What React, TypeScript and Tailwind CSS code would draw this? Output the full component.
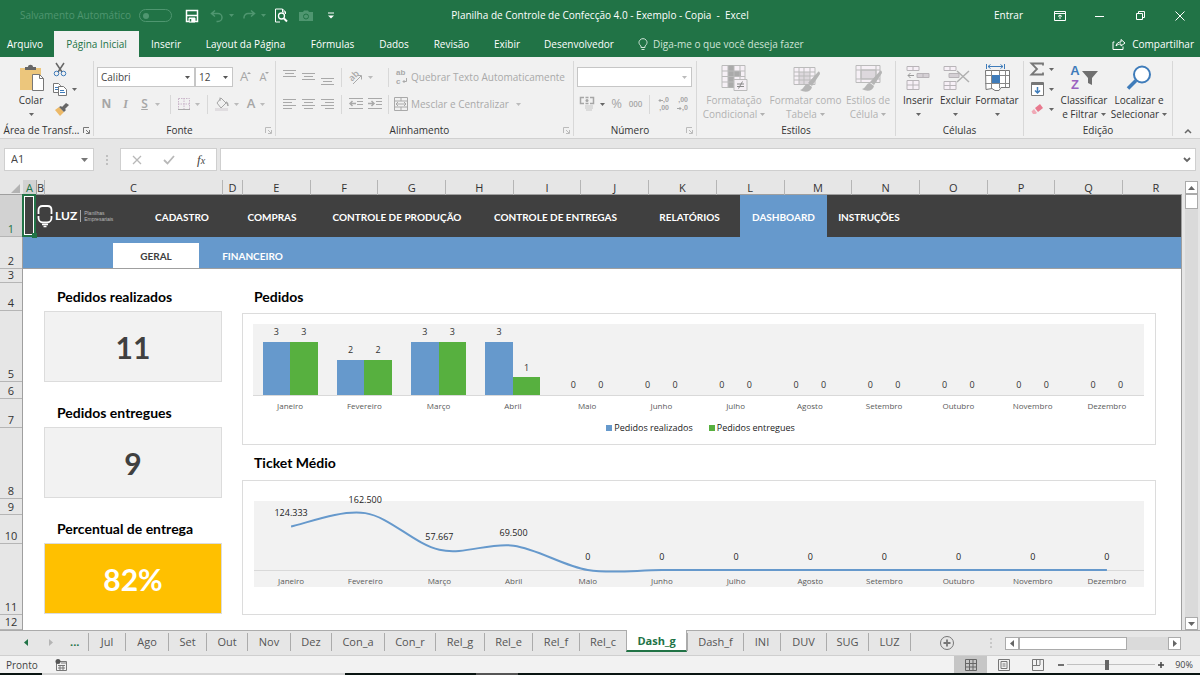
import { useState } from 'react';
import type { ReactNode } from 'react';

const months = ['Janeiro', 'Fevereiro', 'Março', 'Abril', 'Maio', 'Junho', 'Julho', 'Agosto', 'Setembro', 'Outubro', 'Novembro', 'Dezembro'];
const placed = [3, 2, 3, 3, 0, 0, 0, 0, 0, 0, 0, 0];
const delivered = [3, 2, 3, 1, 0, 0, 0, 0, 0, 0, 0, 0];
const ticket = [124333, 162500, 57667, 69500, 0, 0, 0, 0, 0, 0, 0, 0];

const ribbonTabs = [
  { label: 'Arquivo', width: 'w-[54px] pr-1' },
  { label: 'Página Inicial', width: 'w-[85px]', active: true },
  { label: 'Inserir', width: 'w-[54px]' },
  { label: 'Layout da Página', width: 'w-[105px]' },
  { label: 'Fórmulas', width: 'w-[69px]' },
  { label: 'Dados', width: 'w-[54px]' },
  { label: 'Revisão', width: 'w-[61px]' },
  { label: 'Exibir', width: 'w-[50px]' },
  { label: 'Desenvolvedor', width: 'w-[94px]' },
];

const columns = ['A', 'B', 'C', 'D', 'E', 'F', 'G', 'H', 'I', 'J', 'K', 'L', 'M', 'N', 'O', 'P', 'Q', 'R'];

const rows = ['h-[42px]', 'h-[32px]', 'h-[14px]', 'h-[28px]', 'h-[71px]', 'h-[17px]', 'h-[29px]', 'h-[71px]', 'h-[16px]', 'h-[29px]', 'h-[71px]', 'h-[15px]'];

const navItems = [
  { label: 'CADASTRO', width: 'w-[80px]' },
  { label: 'COMPRAS', width: 'w-[100px]' },
  { label: 'CONTROLE DE PRODUÇÃO', width: 'w-[150px]' },
  { label: 'CONTROLE DE ENTREGAS', width: 'w-[167px]' },
  { label: 'RELATÓRIOS', width: 'w-[101px]' },
  { label: 'DASHBOARD', width: 'w-[87px]', active: true },
  { label: 'INSTRUÇÕES', width: 'w-[84px]' },
];

const sheets = [
  { label: 'Jul', width: 'w-[37px]' },
  { label: 'Ago', width: 'w-[43px]' },
  { label: 'Set', width: 'w-[38px]' },
  { label: 'Out', width: 'w-[41px]' },
  { label: 'Nov', width: 'w-[43px]' },
  { label: 'Dez', width: 'w-[41px]' },
  { label: 'Con_a', width: 'w-[53px]' },
  { label: 'Con_r', width: 'w-[51px]' },
  { label: 'Rel_g', width: 'w-[49px]' },
  { label: 'Rel_e', width: 'w-[48px]' },
  { label: 'Rel_f', width: 'w-[47px]' },
  { label: 'Rel_c', width: 'w-[47px]' },
  { label: 'Dash_g', width: 'w-[61px]' },
  { label: 'Dash_f', width: 'w-[56px]' },
  { label: 'INI', width: 'w-[37px]' },
  { label: 'DUV', width: 'w-[46px]' },
  { label: 'SUG', width: 'w-[42px]' },
  { label: 'LUZ', width: 'w-[42px]' },
];

interface IconProps {
  w?: number;
  h?: number;
  children: ReactNode;
  className?: string;
}

const Icon = ({ w = 16, h = 16, children, className = '' }: IconProps) => (
  <svg width={w} height={h} viewBox={`0 0 ${w} ${h}`} fill="none" stroke="currentColor" className={`shrink-0 overflow-visible ${className}`} aria-hidden="true">
    {children}
  </svg>
);

const Caret = ({ className = 'text-[#666]' }: { className?: string }) => (
  <Icon w={5} h={3} className={className}><path d="M0 0h5L2.5 3z" fill="currentColor" stroke="none" /></Icon>
);

const Separator = () => <span className="mx-1 h-[19px] w-px bg-[#d8d8d8]" />;

/* ---------- title bar ---------- */

const TitleBar = () => (
  <header className="grid h-[31px] grid-cols-[1fr_auto_1fr] items-center text-[10px] text-white">
    <div className="flex items-center pl-5 text-[#4f9670]">
      <label className="flex items-center gap-1.5">
        <span className="w-[113px] whitespace-nowrap">Salvamento Automático</span>
        <input type="checkbox" className="peer sr-only" />
        <span className="flex h-[13px] w-[33px] items-center rounded-full border border-[#4f9670] px-[3px]"><span className="size-1.5 rounded-full bg-[#4f9670]" /></span>
      </label>
      <button aria-label="Salvar" className="ml-3 flex w-[16px] justify-center text-white">
        <Icon w={14} h={14}><path d="M1.5 1.5h11v11h-11z" strokeWidth="1.5" /><path d="M2 6.500h10" strokeWidth="1.500" /><path d="M4 9h6v4H4z" fill="currentColor" /><path d="M5.500 10v2.500" stroke="#217346" strokeWidth="1.500" /></Icon>
      </button>
      <button aria-label="Desfazer" className="ml-2.5 flex items-center gap-[5px]">
        <Icon w={14} h={14}><path d="M5 1.5 1.5 4.500 5 7.500M1.500 4.500H8a4 4 0 0 1 0 8H6.500" strokeWidth="1.500" /></Icon><Caret className="text-[#4f9670]" />
      </button>
      <button aria-label="Refazer" className="ml-2 flex items-center gap-[5px]">
        <Icon w={14} h={14}><path d="M9 1.500 12.500 4.500 9 7.500M12.500 4.500H6a4 4 0 0 0-4 4v1" strokeWidth="1.500" /></Icon><Caret className="text-[#4f9670]" />
      </button>
      <button aria-label="Visualizar impressão" className="ml-2 text-white">
        <Icon w={14} h={15}><path d="M11.500 6V4L8.500 1h-7v13H6" /><circle cx="7.500" cy="8" r="3" strokeWidth="1.300" /><path d="m10 10.500 3 3" strokeWidth="2" /><path d="M8.500 1v3h3" /></Icon>
      </button>
      <button aria-label="Câmera" className="ml-2.5">
        <Icon w={16} h={12}><path d="M1 2h4l1-1.500h4L11 2h4v9H1z" fill="currentColor" stroke="none" /><circle cx="8" cy="6.500" r="2.500" stroke="#217346" /></Icon>
      </button>
      <button aria-label="Personalizar" className="ml-3.5 text-white">
        <Icon w={6} h={7}><path d="M0 1h6" /><path d="M0 3.500h6L3 6.500z" fill="currentColor" stroke="none" /></Icon>
      </button>
    </div>
    <h1 className="whitespace-pre text-[10px]">Planilha de Controle de Confecção 4.0 - Exemplo - Copia  -  Excel</h1>
    <div className="flex items-center justify-end">
      <button className="mr-[17px]">Entrar</button>
      <button aria-label="Opções da faixa" className="flex w-10 justify-center">
        <Icon w={12} h={10}><path d="M.5.5h11v9H.5zM1 2.500h10M6 8V4M4 5.500 6 4l2 1.500" /></Icon>
      </button>
      <button aria-label="Minimizar" className="flex w-10 justify-center"><Icon w={10} h={10}><path d="M0 5.500h9" /></Icon></button>
      <button aria-label="Restaurar" className="flex w-10 justify-center"><Icon w={9} h={9}><path d="M.5 2.500h6v6h-6zM2.500 2V.500h6v6H7" /></Icon></button>
      <button aria-label="Fechar" className="flex w-10 justify-center"><Icon w={10} h={10}><path d="m.5.5 9 9M9.500.5l-9 9" /></Icon></button>
    </div>
  </header>
);

const RibbonTabs = () => (
  <nav className="flex h-[26px] items-stretch text-[10px] text-white">
    {ribbonTabs.map(({ label, width, active }) => (
      <button key={label} className={`${width} shrink-0 whitespace-nowrap ${active ? 'bg-[#f1f1f1] text-[#217346]' : ''}`}>{label}</button>
    ))}
    <button className="ml-3 flex items-center gap-[5px] whitespace-nowrap text-[#cfe3d7]">
      <Icon w={10} h={13}><path d="M3 9.500V8C.5 6 .5 3.500 2 2a4 4 0 0 1 6 0c1.500 1.500 1.500 4-1 6v1.500zM3.500 11.500h3" /></Icon>
      Diga-me o que você deseja fazer
    </button>
    <button className="ml-auto mr-1.5 flex items-center gap-1.5">
      <Icon w={14} h={12}><path d="M2.500 4H1v7.500h10V8.500M4 8c.5-3 2.500-4 5-4V1.500L13 5 9 8V6C7 6 5.500 6.500 4 8z" /></Icon>
      Compartilhar
    </button>
  </nav>
);

/* ---------- ribbon ---------- */

interface GroupProps {
  title: string;
  width: string;
  children: ReactNode;
  launcher?: string;
}

const Group = ({ title, width, children, launcher }: GroupProps) => (
  <section className={`${width} flex shrink-0 flex-col pb-0.5 pt-1`}>
    <div className="flex flex-1 border-r border-[#d8d8d8]">{children}</div>
    <div className="flex h-[12px] items-center border-r border-[#d8d8d8] text-[10px] leading-[12px] text-[#333]">
      <h2 className="flex-1 whitespace-nowrap text-center">{title}</h2>
      {launcher && (
        <button aria-label={`Mais opções de ${title}`} className={`mr-[3px] ${launcher}`}>
          <Icon w={7} h={7}><path d="M.5 6V.5H6M3 3l3 3M6.500 3v3.500H3" /></Icon>
        </button>
      )}
    </div>
  </section>
);

interface BigButtonProps {
  icon: ReactNode;
  lines: string[];
  width: string;
  disabled?: boolean;
}

const BigButton = ({ icon, lines, width, disabled }: BigButtonProps) => (
  <button className={`${width} flex h-[60px] shrink-0 flex-col items-center text-[10px] leading-[14px] whitespace-nowrap ${disabled ? 'text-[#b1b1b1]' : 'text-[#333]'}`}>
    <span className="flex h-[31px] items-center">{icon}</span>
    <span>{lines[0]}</span>
    <span className="flex h-[14px] items-center gap-[3px]">{lines[1]}<Caret className={disabled ? 'text-[#b1b1b1]' : 'text-[#666]'} /></span>
  </button>
);

const SmallButton = ({ label, children, className = 'w-[19px]' }: { label: string; children: ReactNode; className?: string }) => (
  <button aria-label={label} className={`${className} flex h-5 shrink-0 items-center justify-center gap-[5px]`}>{children}</button>
);

const ComboBox = ({ label, options, width, tone }: { label: string; options: string[]; width: string; tone: string }) => (
  <span className={`${width} relative flex h-5 items-center border border-[#c6c6c6] bg-white`}>
    <select aria-label={label} className="h-full w-full appearance-none pl-[3px] text-[10px] text-[#444] outline-none">
      {options.map((option) => <option key={option}>{option}</option>)}
    </select>
    <span className={`pointer-events-none absolute right-1 ${tone}`}><Caret className="" /></span>
  </span>
);

const lineSets = {
  top: 'M0 1.500h13M2 4.500h9M0 7.500h13',
  left: 'M0 1.500h13M0 4.500h9M0 7.500h13M0 10.500h9',
  center: 'M0 1.500h13M2 4.500h9M0 7.500h13M2 10.500h9',
  right: 'M0 1.500h13M4 4.500h9M0 7.500h13M4 10.500h9',
};

const Brush = () => (
  <><path d="M23 5 13 16l4 3 8-12c0-2-1-3-2-2z" fill="#b5b5b5" stroke="none" /><path d="M13 17c-4 0-4 5-8 6 5 3 11 2 12-3z" fill="#b5b5b5" stroke="none" /></>
);

const ClipboardGroup = () => (
  <Group title="Área de Transf..." width="w-[94px]" launcher="text-[#777]">
    <div className="pl-[9px] pt-px">
      <BigButton width="w-[44px]" lines={['Colar', '']} icon={
        <Icon w={26} h={28}>
          <path d="M2 4h21v22H2z" fill="#ecc67c" stroke="none" />
          <path d="M7 6V3h3c0-3 5-3 5 0h3v3z" fill="#666" stroke="none" />
          <path d="M14.500 10.500h7l4 4v12h-11z" fill="#fff" stroke="#777" /><path d="M21.500 10.500v4h4" stroke="#777" />
        </Icon>} />
    </div>
    <div className="-mt-0.5 flex flex-col">
      <SmallButton label="Recortar" className="w-[14px]">
        <Icon w={14} h={15}><path d="m3 1 6 9M11 1 5 10" stroke="#666" strokeWidth="1.500" /><circle cx="3.500" cy="11.500" r="2.300" stroke="#3f7cba" /><circle cx="10.500" cy="11.500" r="2.300" stroke="#3f7cba" /></Icon>
      </SmallButton>
      <SmallButton label="Copiar" className="w-[24px]">
        <Icon w={14} h={14}><path d="M.5 1.500h5l2 2v7h-7z" fill="#fff" stroke="#777" /><path d="M2 5.500h3M2 7.500h3" stroke="#3f7cba" /><path d="M5.500 4.500h5l3 3v6h-8z" fill="#fff" stroke="#777" /><path d="M7 8.500h4M7 10.500h5" stroke="#3f7cba" /></Icon>
        <Caret />
      </SmallButton>
      <SmallButton label="Pincel de formatação" className="w-[16px]">
        <Icon w={15} h={14}><path d="m1 8 4-3 5 5-4 4z" fill="#ecb968" stroke="none" /><path d="m5 5 2-1 1 1 4-4 3 2-4 4 1 1-2 2z" fill="#666" stroke="none" /></Icon>
      </SmallButton>
    </div>
  </Group>
);

const FontGroup = () => (
  <Group title="Fonte" width="w-[182px]" launcher="text-[#bbb]">
    <div className="flex flex-col gap-[7px] pl-[3px] pt-1.5 text-[#a6a6a6]">
      <div className="flex items-center">
        <ComboBox label="Fonte" options={['Calibri', 'Arial']} width="w-[98px]" tone="text-[#555]" />
        <ComboBox label="Tamanho" options={['12', '14']} width="w-[38px]" tone="text-[#555]" />
        <SmallButton label="Aumentar fonte" className="ml-[3px] w-[19px]"><span className="text-[13px]">A</span><Icon w={4} h={12} className="-ml-1.5"><path d="M0 3h4L2 1z" fill="currentColor" stroke="none" /></Icon></SmallButton>
        <SmallButton label="Diminuir fonte"><span className="text-[11px]">A</span><Icon w={4} h={12} className="-ml-1.5"><path d="M0 1h4L2 3z" fill="currentColor" stroke="none" /></Icon></SmallButton>
      </div>
      <div className="flex items-center text-[12px]">
        <SmallButton label="Negrito"><b>N</b></SmallButton>
        <SmallButton label="Itálico"><i className="font-['Liberation_Serif',serif] font-bold">I</i></SmallButton>
        <SmallButton label="Sublinhado" className="w-[31px]"><u className="font-semibold">S</u><Caret className="ml-0.5 text-[#bbb]" /></SmallButton>
        <Separator />
        <SmallButton label="Bordas" className="w-[28px]"><Icon w={12} h={12}><path d="M.5.5h11v11H.5zM6 0v12M0 6h12" stroke="#c9b5c9" strokeDasharray="1.500 1" /><path d="M0 11.500h12" stroke="#aaa" /></Icon><Caret className="text-[#bbb]" /></SmallButton>
        <Separator />
        <SmallButton label="Cor de preenchimento" className="w-[29px]"><Icon w={14} h={14}><path d="m6 1 5 5-5 5-4-5zM5 4V.500" /><path d="M11 5c2 1 2 3 2 4" strokeWidth="1.500" /><path d="M0 12.500h13" stroke="#e0dde0" strokeWidth="3" /></Icon><Caret className="text-[#bbb]" /></SmallButton>
        <SmallButton label="Cor da fonte" className="w-[30px]"><span className="text-[13px] font-semibold">A</span><Caret className="text-[#bbb]" /></SmallButton>
      </div>
    </div>
  </Group>
);

const AlignGroup = () => (
  <Group title="Alinhamento" width="w-[298px]" launcher="text-[#bbb]">
    <div className="flex flex-col gap-[7px] pl-1 pt-1.5 text-[#a9a9a9]">
      <div className="flex h-5 items-center">
        <SmallButton label="Alinhar acima"><Icon w={13} h={16}><path d={lineSets.top} /></Icon></SmallButton>
        <SmallButton label="Alinhar no meio"><Icon w={13} h={10}><path d={lineSets.top} /></Icon></SmallButton>
        <SmallButton label="Alinhar abaixo"><Icon w={13} h={9} className="mt-2"><path d={lineSets.top} /></Icon></SmallButton>
        <Separator />
        <SmallButton label="Orientação" className="w-[28px]">
          <span className="relative flex size-[15px] items-center justify-center">
            <span className="-translate-x-0.5 -translate-y-0.5 -rotate-45 text-[9px] font-semibold leading-none">ab</span>
            <Icon w={15} h={15} className="absolute"><path d="m5 14 8-8M9.500 5.500h4v4" /></Icon>
          </span>
          <Caret className="text-[#bbb]" />
        </SmallButton>
        <span className="w-2.5" />
        <Separator />
        <button className="flex items-center gap-[3px] whitespace-nowrap pl-[3px] text-[10px]">
          <span className="relative flex w-3 flex-col text-left font-['Liberation_Sans',sans-serif] text-[8px] font-bold leading-[9px]">
            <span>ab</span><span>c</span>
            <Icon w={6} h={6} className="absolute bottom-0.5 right-0"><path d="M4.500 0v3.500H1M2.500 2 1 3.500 2.500 5" /></Icon>
          </span>
          Quebrar Texto Automaticamente
        </button>
      </div>
      <div className="flex items-center">
        <SmallButton label="Alinhar à esquerda"><Icon w={13} h={12}><path d={lineSets.left} /></Icon></SmallButton>
        <SmallButton label="Centralizar"><Icon w={13} h={12}><path d={lineSets.center} /></Icon></SmallButton>
        <SmallButton label="Alinhar à direita"><Icon w={13} h={12}><path d={lineSets.right} /></Icon></SmallButton>
        <Separator />
        <SmallButton label="Diminuir recuo"><Icon w={14} h={12}><path d="M0 .5h14M8 3.500h6M8 6.500h6M0 10.500h14" /><path d="M7 5.500H1M3.500 3 1 5.500 3.500 8" strokeWidth="1.500" /></Icon></SmallButton>
        <SmallButton label="Aumentar recuo"><Icon w={14} h={12}><path d="M0 .5h14M8 3.500h6M8 6.500h6M0 10.500h14" /><path d="M0 5.500h6M3.500 3 6 5.500 3.500 8" strokeWidth="1.500" /></Icon></SmallButton>
        <Separator />
        <button className="flex items-center gap-[3px] whitespace-nowrap pl-px text-[10px]">
          <Icon w={14} h={14}><path d="M.5.500h13v13H.500zM.500 4h13M.500 10h13M7 .500V4M7 10v3.500" /><path d="M2 7h10M4 5 2 7l2 2M10 5l2 2-2 2" /></Icon>
          Mesclar e Centralizar <Caret className="ml-1 text-[#bbb]" />
        </button>
      </div>
    </div>
  </Group>
);

const NumberGroup = () => (
  <Group title="Número" width="w-[123px]" launcher="text-[#bbb]">
    <div className="flex flex-col gap-[7px] pl-[3px] pt-1.5 text-[#a6a6a6]">
      <ComboBox label="Formato de número" options={['']} width="w-[115px]" tone="text-[#bbb]" />
      <div className="flex items-center">
        <SmallButton label="Moeda" className="w-[30px]">
          <Icon w={15} h={14}><path d="M4 .500H.500v6H4M10 .500h3.500v6H10M5.500.500h3M5.500 6.500h3" strokeWidth="1.500" /><circle cx="7" cy="3.500" r="1.500" fill="currentColor" stroke="none" /><path d="M5 9h8M5 11h8M6 13h6" stroke="#c5c5c5" /></Icon><Caret />
        </SmallButton>
        <SmallButton label="Porcentagem"><span className="text-[13px]">%</span></SmallButton>
        <SmallButton label="Milhares"><span className="text-[8px] font-semibold">000</span></SmallButton>
        <Separator />
        <SmallButton label="Aumentar casas decimais">
          <span className="flex flex-col items-end font-['Liberation_Sans',sans-serif] text-[7px] font-bold leading-[8px]"><span className="flex items-center"><Icon w={5} h={5}><path d="M5 2.500H1M2.500 1 1 2.500 2.500 4" /></Icon>,0</span><span>,00</span></span>
        </SmallButton>
        <SmallButton label="Diminuir casas decimais">
          <span className="flex flex-col items-end font-['Liberation_Sans',sans-serif] text-[7px] font-bold leading-[8px]"><span>,00</span><span className="flex items-center"><Icon w={5} h={5}><path d="M0 2.500h4M2.500 1 4 2.500 2.500 4" /></Icon>,0</span></span>
        </SmallButton>
      </div>
    </div>
  </Group>
);

const StylesGroup = () => (
  <Group title="Estilos" width="w-[199px]">
    <div className="flex pl-0.5 pt-px">
      <BigButton disabled width="w-[70px]" lines={['Formatação', 'Condicional']} icon={
        <Icon w={28} h={28} className="text-[#bbb]">
          <path d="M2 1.500h23v22H2z" fill="#f6f0f6" /><path d="M8 1.500h6v22H8zM14 7h7v5h-7z" fill="#aaa" stroke="none" /><path d="M8 1v23M14 1v23M20 1v23M2 7h23M2 12.500h23M2 18h23" />
          <path d="M14 15.500h13v11H14z" fill="#f4eff4" /><path d="M17 20h7M17 22.500h7M22.500 17.500l-4 7" stroke="#888" />
        </Icon>} />
      <BigButton disabled width="w-[73px]" lines={['Formatar como', 'Tabela']} icon={
        <Icon w={28} h={28} className="text-[#bbb]">
          <path d="M2 3.500h21v17H2z" fill="#f6f0f6" /><path d="M7 8h11v12H7z" fill="#ddd8dd" stroke="none" /><path d="M7 3v18M12 3v18M18 3v18M2 8h21M2 12h21M2 16h21" /><g transform="translate(3 3)"><Brush /></g>
        </Icon>} />
      <BigButton disabled width="w-[52px]" lines={['Estilos de', 'Célula']} icon={
        <Icon w={28} h={28} className="text-[#bbb]">
          <path d="M2 1.500h24v17H2z" fill="#f6f0f6" /><path d="M7 6h15v9H7z" fill="#ddd8dd" /><path d="M7 1v18M22 1v18M2 6h24M2 15h24" /><g transform="translate(3 2)"><Brush /></g>
        </Icon>} />
    </div>
  </Group>
);

const CellsGroup = () => (
  <Group title="Células" width="w-[128px]">
    <div className="flex pl-[3px] pt-px">
      <BigButton width="w-[38px]" lines={['Inserir', '']} icon={
        <Icon w={26} h={26} className="text-[#b8b4b8]">
          <path d="M2 1.500h12v4H2zM8 1.500v4M2 15.500h12v9H2zM8 15.500v9M2 20h12" fill="#f7f0f7" /><path d="M12 8.500h12v4H12zM18 8.500v4" fill="#d5d0d5" /><path d="M9 10.500H3M5.500 8 3 10.500 5.500 13" stroke="#999" />
        </Icon>} />
      <BigButton width="w-[37px]" lines={['Excluir', '']} icon={
        <Icon w={28} h={26} className="text-[#b8b4b8]">
          <path d="M2 1.500h12v4H2zM8 1.500v4M2 16.500h12v8H2zM8 16.500v8M2 20.500h12" fill="#f7f0f7" /><path d="M7 8.500h10v4H7z" fill="#d5d0d5" /><path d="m15 6 12 11M27 6 15 17" stroke="#b0b0b0" strokeWidth="1.500" />
        </Icon>} />
      <BigButton width="w-[46px]" lines={['Formatar', '']} icon={
        <Icon w={27} h={28}>
          <path d="M2.500 0v5M20.500 0v5M4 2.500h15M6.500.5 4 2.500l2.500 2M16.500.5l2.500 2-2.500 2" stroke="#3f7cba" />
          <path d="M1.500 6.500h24v17H17l-2 3h-4l-3-2-6 1z" fill="#fff" stroke="#777" /><path d="M7.500 6v18M15.500 6v18M21.500 6v17M1 11.500h24M1 19.500h24" stroke="#888" /><path d="M8 11h8v8H8z" fill="#3f7cba" stroke="none" />
        </Icon>} />
    </div>
  </Group>
);

const EditGroup = () => (
  <Group title="Edição" width="w-[149px]">
    <div className="-mt-0.5 flex w-[28px] flex-col pl-[6px]">
      <SmallButton label="Soma" className="w-[24px]"><Icon w={14} h={14} className="text-[#777]"><path d="M13 3.500V1.500H1.500L7 7l-5.500 5.500H13V10.500" strokeWidth="1.800" /></Icon><Caret /></SmallButton>
      <SmallButton label="Preencher" className="w-[24px]"><Icon w={13} h={14}><path d="M.5.500h12v13H.500z" fill="#fff" stroke="#777" /><path d="M.5 2h12" stroke="#777" strokeWidth="2" /><path d="M6.500 5v6M4 8.500l2.500 2.500L9 8.500" stroke="#3f7cba" strokeWidth="1.500" /></Icon><Caret /></SmallButton>
      <SmallButton label="Limpar" className="w-[24px]"><Icon w={13} h={12}><path d="m4 5 5-4 3 4-5 4z" fill="#e8798e" stroke="none" /><path d="m3 6 3 4-1.500 1H2L.5 8.500z" fill="#f0a9b6" stroke="none" /></Icon><Caret /></SmallButton>
    </div>
    <div className="flex pl-[5px] pt-px">
      <BigButton width="w-[54px]" lines={['Classificar', 'e Filtrar']} icon={
        <span className="flex items-center gap-0.5">
          <span className="flex flex-col font-['Liberation_Sans',sans-serif] text-[13px] font-bold leading-[14px]"><span className="text-[#3f7cba]">A</span><span className="text-[#9b62c0]">Z</span></span>
          <Icon w={16} h={16}><path d="M0 1h16l-6 7v7l-4-2V8z" fill="#707070" stroke="none" /></Icon>
        </span>} />
      <BigButton width="w-[56px]" lines={['Localizar e', 'Selecionar']} icon={
        <Icon w={26} h={26}><circle cx="16" cy="9.500" r="8" fill="#fff" stroke="#3f7cba" strokeWidth="2" /><path d="m10 15.500-8 8" stroke="#3f7cba" strokeWidth="3.500" /></Icon>} />
    </div>
  </Group>
);

const Ribbon = () => (
  <div className="flex h-[82px] border-b border-[#d0d0d0] bg-[#f1f1f1]">
    <ClipboardGroup />
    <FontGroup />
    <AlignGroup />
    <NumberGroup />
    <StylesGroup />
    <CellsGroup />
    <EditGroup />
    <button aria-label="Recolher faixa de opções" className="ml-auto mr-2 self-end pb-1 text-[#666]">
      <Icon w={8} h={6}><path d="M1 5 4 2l3 3" strokeWidth="1.500" /></Icon>
    </button>
  </div>
);

const FormulaBar = () => (
  <div className="flex h-[41px] items-start bg-[#e6e6e6] px-1 pt-[9px] text-[#444]">
    <div className="relative flex h-[23px] w-[90px] items-center border border-[#cfcfcf] bg-white">
      <input aria-label="Caixa de nome" defaultValue="A1" className="w-full pl-1.5 text-[11px] outline-none" />
      <span className="pointer-events-none absolute right-[5px]"><Icon w={7} h={4}><path d="M0 0h7L3.500 4z" fill="#777" stroke="none" /></Icon></span>
    </div>
    <span className="flex h-[23px] w-[26px] items-center justify-center"><Icon w={2} h={10}><path d="M1 0v10" stroke="#999" strokeDasharray="2 2" /></Icon></span>
    <div className="flex h-[23px] w-[97px] items-center justify-around border border-[#cfcfcf] bg-white text-[#b8b8b8]">
      <button aria-label="Cancelar"><Icon w={10} h={10}><path d="m1 1 8 8M9 1 1 9" strokeWidth="1.300" /></Icon></button>
      <button aria-label="Inserir"><Icon w={12} h={10}><path d="m1 5 3.500 3.500L11 1" strokeWidth="1.800" /></Icon></button>
      <button aria-label="Inserir função" className="font-['Liberation_Serif',serif] text-[13px] italic leading-none text-[#444]">f<span className="text-[10px]">x</span></button>
    </div>
    <div className="relative ml-[3px] flex h-[23px] flex-1 items-center border border-[#cfcfcf] bg-white">
      <input aria-label="Barra de fórmulas" className="w-full px-1 text-[11px] outline-none" />
      <button aria-label="Expandir barra de fórmulas" className="absolute right-1"><Icon w={8} h={6}><path d="m1 1 3 3 3-3" stroke="#666" strokeWidth="1.800" /></Icon></button>
    </div>
  </div>
);

/* ---------- worksheet ---------- */

const ColumnHeader = () => (
  <div className="grid h-[15px] grid-cols-[23px_14px_8px_178px_20px_repeat(13,minmax(0,1fr))_59px] border-b border-[#9f9f9f] bg-[#e6e6e6] text-center text-[11px] leading-[15px] text-[#333]">
    <span className="flex items-end justify-end pb-0.5 pr-[3px]"><Icon w={9} h={9}><path d="M9 0v9H0z" fill="#b3b3b3" stroke="none" /></Icon></span>
    {columns.map((name) => (
      <span key={name} className={`flex justify-center border-r ${name === 'A' ? 'border-[#9f9f9f] bg-[#d2d2d2] text-[#217346]' : name === 'R' ? 'border-transparent pl-2' : 'border-[#b5b5b5]'}`}>{name}</span>
    ))}
  </div>
);

const RowHeader = () => (
  <div className="w-[23px] shrink-0 border-r border-[#9f9f9f] bg-[#e6e6e6] text-[11px] text-[#333]">
    {rows.map((height, i) => (
      <div key={i} className={`${height} flex items-end justify-center border-b border-[#b5b5b5] leading-[14px] ${i === 0 ? 'bg-[#d2d2d2] text-[#217346]' : ''}`}>{i + 1}</div>
    ))}
  </div>
);

const Logo = () => (
  <div className="flex items-center text-white">
    <Icon w={16} h={24}>
      <path d="M1.500 10V6c0-2.500 1.500-4 4-4h5c2.500 0 4 1.500 4 4v4M1.500 12v2c0 2.500 2 4.500 4.500 4.500h4c2.500 0 4.500-2 4.500-4.500v-2" strokeWidth="1.800" />
      <path d="M5 20.500h6M6.500 22.500h3" strokeWidth="1.500" />
    </Icon>
    <span className="ml-0.5 font-['Lato',sans-serif] text-[12px]">LUZ</span>
    <span className="mx-[3px] h-3 w-px bg-[#aaa]" />
    <span className="font-['Liberation_Sans',sans-serif] text-[5px] font-normal leading-[6px] text-[#bbb]">Planilhas<br />Empresariais</span>
  </div>
);

const SheetNav = () => (
  <>
    <nav className="flex h-[42px] bg-[#404040] font-['Lato',sans-serif] text-[10px] font-bold text-white">
      <div className="relative flex w-[119px] shrink-0 items-stretch">
        <span className="absolute -left-px -top-px h-[43px] w-[14px] border-2 border-[#217346] shadow-[inset_0_0_0_1px_#fff]"><span className="absolute -bottom-[3px] -right-[3px] size-[5px] bg-[#217346]" /></span>
        <div className="flex pl-[14px]"><Logo /></div>
      </div>
      {navItems.map(({ label, width, active }) => (
        <a key={label} href="#" className={`${width} flex shrink-0 items-center justify-center whitespace-nowrap pt-0.5 ${active ? 'bg-[#6699cc]' : ''}`}>{label}</a>
      ))}
    </nav>
    <nav className="flex h-[32px] items-end border-b border-[#9f9f9f] bg-[#6699cc] pl-[90px] font-['Lato',sans-serif] text-[10px] font-bold text-white">
      <a href="#" className="flex h-[25px] w-[86px] items-center justify-center bg-white pt-0.5 text-[#404040]">GERAL</a>
      <a href="#" className="flex h-[25px] w-[107px] items-center justify-center pt-0.5">FINANCEIRO</a>
    </nav>
  </>
);

const KpiCard = ({ title, value, highlight }: { title: string; value: string; highlight?: boolean }) => (
  <section>
    <h3 className="flex h-[29px] items-center pl-[13px] font-['Lato',sans-serif] text-[14px] font-bold text-black">{title}</h3>
    <p className={`flex h-[71px] items-center justify-center border border-[#dcdcdc] pt-0.5 font-['Lato',sans-serif] text-[30px] font-bold ${highlight ? 'bg-[#ffc000] text-white' : 'bg-[#f2f2f2] text-[#404040]'}`}>{value}</p>
  </section>
);

const Bar = ({ value, color }: { value: number; color: string }) => (
  <div className="flex w-[37%] flex-col items-center text-[9px] text-[#333]">
    <span className="flex h-5 items-center">{value}</span>
    <div className={`w-full ${color}`} style={{ height: value * 17.67 }} />
  </div>
);

const MonthLabels = () => (
  <div className="grid grid-cols-12 text-center text-[8px] leading-[12px] text-[#595959]">
    {months.map((month) => <span key={month}>{month}</span>)}
  </div>
);

const OrdersChart = () => (
  <div className="h-[132px] border border-[#dcdcdc] bg-white pl-2.5 pr-[11px] pt-[10px]">
    <div className="grid h-[72px] grid-cols-12 grid-rows-1 border-b border-[#d9d9d9] bg-[#f2f2f2]">
      {months.map((month, i) => (
        <div key={month} className="flex items-end justify-center">
          <Bar value={placed[i]} color="bg-[#6699cc]" />
          <Bar value={delivered[i]} color="bg-[#57b03f]" />
        </div>
      ))}
    </div>
    <div className="pt-1"><MonthLabels /></div>
    <ul className="mt-[9px] flex justify-center gap-4 pl-1 text-[9px] leading-[14px] text-[#222]">
      <li className="flex items-center gap-0.5"><span className="size-1.5 bg-[#6699cc]" />Pedidos realizados</li>
      <li className="flex items-center gap-0.5"><span className="size-1.5 bg-[#57b03f]" />Pedidos entregues</li>
    </ul>
  </div>
);

const CHART_WIDTH = 1200;
const AXIS_Y = 69;
const tickets = ticket.map((value, i) => ({ x: 50 + i * 100, y: AXIS_Y - value * 0.00035 }));

// Catmull-Rom spline through the points, written as cubic segments
const smoothPath = tickets.slice(0, -1).reduce((path, p1, i) => {
  const p0 = tickets[i - 1] ?? p1;
  const p2 = tickets[i + 1];
  const p3 = tickets[i + 2] ?? p2;
  return `${path} C ${p1.x + (p2.x - p0.x) / 6} ${p1.y + (p2.y - p0.y) / 6}, ${p2.x - (p3.x - p1.x) / 6} ${p2.y - (p3.y - p1.y) / 6}, ${p2.x} ${p2.y}`;
}, `M ${tickets[0].x} ${tickets[0].y}`);

const TicketChart = () => (
  <div className="h-[135px] border border-[#dcdcdc] bg-white px-[11px] pt-5">
    <div className="relative h-[86px] bg-[#f2f2f2]">
      <svg viewBox={`0 0 ${CHART_WIDTH} 86`} preserveAspectRatio="none" className="absolute inset-0 h-full w-full" fill="none">
        <path d={`M0 ${AXIS_Y + 0.5}H${CHART_WIDTH}`} stroke="#d9d9d9" vectorEffect="non-scaling-stroke" />
        <path d={smoothPath} stroke="#6699cc" strokeWidth="2" vectorEffect="non-scaling-stroke" />
      </svg>
      <div className="relative grid h-[69px] grid-cols-12 grid-rows-1 text-[9px] leading-[12px] text-[#222]">
        {ticket.map((value, i) => (
          <span key={i} className="self-end text-center" style={{ marginBottom: AXIS_Y - tickets[i].y + 7 }}>{value.toLocaleString('de-DE')}</span>
        ))}
      </div>
      <div className="relative pt-[5px]"><MonthLabels /></div>
    </div>
  </div>
);

const Dashboard = () => (
  <div className="flex flex-1 flex-col border-r border-[#9f9f9f] bg-white">
    <SheetNav />
    <div className="flex flex-1 gap-5 pl-[21px] pr-[25px] pt-[13px]">
      <div className="flex w-[178px] shrink-0 flex-col gap-4">
        <KpiCard title="Pedidos realizados" value="11" />
        <KpiCard title="Pedidos entregues" value="9" />
        <KpiCard title="Percentual de entrega" value="82%" highlight />
      </div>
      <div className="flex-1">
        <h3 className="flex h-[31px] items-center pb-0.5 pl-3 font-['Lato',sans-serif] text-[14px] font-bold">Pedidos</h3>
        <OrdersChart />
        <h3 className="flex h-[35px] items-center pl-3 font-['Lato',sans-serif] text-[14px] font-bold">Ticket Médio</h3>
        <TicketChart />
      </div>
    </div>
  </div>
);

const VerticalScroll = () => (
  <div className="flex w-[18px] shrink-0 flex-col items-center bg-[#e6e6e6] pt-px">
    <button aria-label="Rolar para cima" className="flex h-[13px] w-[13px] items-center justify-center border border-[#ababab] bg-white"><Icon w={7} h={4}><path d="M0 4h7L3.500 0z" fill="#666" stroke="none" /></Icon></button>
    <div className="w-[13px] flex-1 bg-[#dadada]"><div className="h-[15px] border border-[#ababab] bg-white" /></div>
    <button aria-label="Rolar para baixo" className="flex h-[13px] w-[13px] items-center justify-center border border-[#ababab] bg-white"><Icon w={7} h={4}><path d="M0 0h7L3.500 4z" fill="#666" stroke="none" /></Icon></button>
  </div>
);

const SheetTabs = () => {
  const [current, setCurrent] = useState('Dash_g');
  return (
    <footer className="flex h-[26px] border-b border-[#cfcfcf] bg-[#e6e6e6] text-[11px] text-[#555]">
      <div className="flex w-[88px] shrink-0 items-center border-t border-[#ababab] pb-0.5 pl-6">
        <button aria-label="Planilha anterior"><Icon w={4} h={7}><path d="M4 0v7L0 3.500z" fill="#217346" stroke="none" /></Icon></button>
        <button aria-label="Próxima planilha" className="ml-[21px]"><Icon w={4} h={7}><path d="M0 0v7l4-3.500z" fill="#b5b5b5" stroke="none" /></Icon></button>
        <button className="ml-[17px] font-bold text-[#217346]">...</button>
      </div>
      {sheets.map(({ label, width }) => (
        label === current
          ? <button key={label} className={`${width} shrink-0 mb-[3px] border-x border-b-2 border-x-[#ababab] border-b-[#217346] bg-white pt-0.5 font-bold text-[#217346]`}>{label}</button>
          : <button key={label} onClick={() => setCurrent(label)} className={`${width} flex shrink-0 items-center border-t border-[#ababab] pb-0.5`}><span className="flex h-[18px] w-full items-center justify-center border-l border-[#ababab]">{label}</span></button>
      ))}
      <div className="flex flex-1 items-center border-t border-[#ababab]">
        <span className="mb-0.5 h-[18px] w-px bg-[#ababab]" />
        <button aria-label="Nova planilha" className="ml-[29px] text-[#777]"><Icon w={14} h={14}><circle cx="7" cy="7" r="6.500" /><path d="M7 3.500v7M3.500 7h7" strokeWidth="1.800" /></Icon></button>
        <span className="ml-auto mr-[13px]"><Icon w={2} h={10}><path d="M1 0v10" stroke="#aaa" strokeDasharray="2 2" /></Icon></span>
        <div className="mr-[19px] flex h-[13px] w-[176px] bg-[#dadada]">
          <button aria-label="Rolar para a esquerda" className="flex w-[14px] items-center justify-center border border-[#ababab] bg-white"><Icon w={4} h={7}><path d="M4 0v7L0 3.500z" fill="#666" stroke="none" /></Icon></button>
          <div className="w-[108px] border border-[#ababab] bg-white" />
          <button aria-label="Rolar para a direita" className="ml-auto flex w-[13px] items-center justify-center border border-[#ababab] bg-white"><Icon w={4} h={7}><path d="M0 0v7l4-3.500z" fill="#666" stroke="none" /></Icon></button>
        </div>
      </div>
    </footer>
  );
};

const StatusBar = () => (
  <div className="flex h-[17px] items-center bg-[#f2f2f2] pl-1.5 text-[10px] leading-[16px] text-[#444]">
    <span>Pronto</span>
    <button aria-label="Gravar macro" className="ml-[17px]"><Icon w={12} h={12}><path d="M1.500 4v7.500h10v-9H5" stroke="#777" /><circle cx="3" cy="2.500" r="2.500" fill="#555" stroke="none" /><path d="M6 4h5M3 6.500h7M3 9h7M5 6v5M8 6v5" stroke="#777" /></Icon></button>
    <div className="ml-auto flex h-full items-center">
      <button aria-label="Normal" className="flex h-full w-[33px] items-center justify-center bg-[#c6c6c6]"><Icon w={12} h={12}><path d="M.5.500h11v11H.500zM4.500 0v12M8 0v12M0 4.500h12M0 8h12" stroke="#666" /></Icon></button>
      <button aria-label="Layout da página" className="flex w-[34px] justify-center"><Icon w={12} h={12}><path d="M.5.500h11v11H.500zM3 2.500h6v7H3zM4.500 5h3M4.500 7h3" stroke="#777" /></Icon></button>
      <button aria-label="Quebra de página" className="flex w-[33px] justify-center"><Icon w={12} h={12}><path d="M.5.500h11v11H.500zM4.500 0v6M8 0v6M1 6.500h7" stroke="#777" /></Icon></button>
      <button aria-label="Diminuir zoom" className="ml-1 w-1.5"><Icon w={6} h={6}><path d="M0 3h6" stroke="#444" strokeWidth="1.500" /></Icon></button>
      <input type="range" aria-label="Zoom" min={0} max={100} defaultValue={45} className="ml-[3px] h-3 w-[88px] appearance-none bg-[linear-gradient(#c0c0c0,#c0c0c0)] bg-[length:100%_1px] bg-center bg-no-repeat [&::-webkit-slider-thumb]:h-[10px] [&::-webkit-slider-thumb]:w-1 [&::-webkit-slider-thumb]:appearance-none [&::-webkit-slider-thumb]:bg-[#666]" />
      <button aria-label="Aumentar zoom" className="ml-[3px]"><Icon w={6} h={6}><path d="M0 3h6M3 0v6" stroke="#444" strokeWidth="1.500" /></Icon></button>
      <span className="w-[36px] pl-1 text-center text-[9px]">90%</span>
    </div>
  </div>
);

const App = () => (
  <div className="flex min-h-screen flex-col overflow-hidden bg-[#217346] font-['Open_Sans','Noto_Sans',sans-serif]">
    <TitleBar />
    <RibbonTabs />
    <Ribbon />
    <FormulaBar />
    <main className="flex">
      <div className="min-w-0 flex-1">
        <ColumnHeader />
        <div className="flex">
          <RowHeader />
          <Dashboard />
        </div>
      </div>
      <VerticalScroll />
    </main>
    <SheetTabs />
    <StatusBar />
    <div className="flex min-h-0.5 flex-1 bg-[#0a1512]">
      <span className="ml-[42px] w-[303px] bg-[#d5d5d5]" />
      <span className="ml-[131px] w-[42px] bg-[#555]" />
    </div>
  </div>
);

export default App;
